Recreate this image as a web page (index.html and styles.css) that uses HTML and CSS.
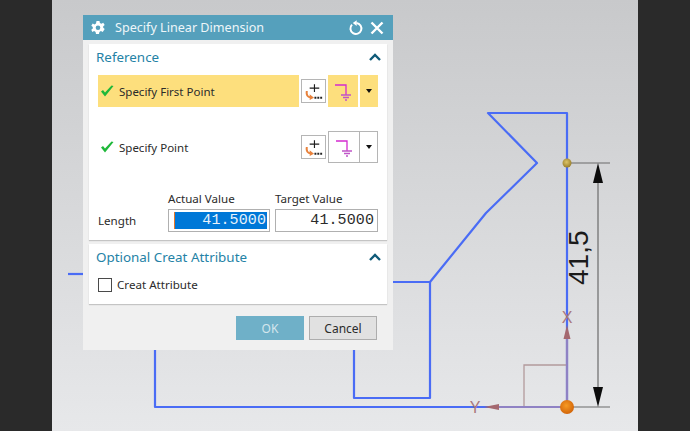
FILE: index.html
```html
<!DOCTYPE html>
<html lang="en">
<head>
<meta charset="utf-8">
<title>Specify Linear Dimension</title>
<link rel="stylesheet" href="styles.css">
</head>
<body>
<div class="screen">
  <div class="side"></div>
  <main class="viewport">
    <svg class="cad" viewBox="52 0 586 431" width="586" height="431">
      <defs>
        <radialGradient id="goldBall" cx="45%" cy="40%" r="60%">
          <stop offset="0" stop-color="#dcc468"/>
          <stop offset="1" stop-color="#9a7f2c"/>
        </radialGradient>
        <radialGradient id="orangeBall" cx="45%" cy="40%" r="60%">
          <stop offset="0" stop-color="#f79a22"/>
          <stop offset="1" stop-color="#d2650a"/>
        </radialGradient>
      </defs>
      <g class="cad-blue">
        <path d="M68 274H90"/>
        <path d="M380 282H430L486 213L537 163L488 113H567V407H155V340"/>
        <path d="M430 282V398H354V340"/>
      </g>
      <g class="dim">
        <path d="M567 163H610"/>
        <path d="M567 407H610"/>
        <path d="M598 170V400"/>
      </g>
      <path class="arrow" d="M598 163L593 183H603Z"/>
      <path class="arrow" d="M598 407L593 387H603Z"/>
      <text class="dim-text" transform="translate(588 285) rotate(-90)">41,5</text>
      <path class="triad-box" d="M567 365H524V407"/>
      <path class="triad-line" d="M567 339V407H499"/>
      <path class="triad-arrow" d="M567 325L563.500 339H570.500Z"/>
      <path class="triad-arrow" d="M484 407L499 404V410Z"/>
      <text class="triad-text" x="567" y="323">X</text>
      <text class="triad-text" x="475" y="413">Y</text>
      <circle class="gold" cx="567" cy="163" r="4.500"/>
      <circle class="orange" cx="567" cy="407" r="7"/>
    </svg>

    <section class="dialog">
      <header class="titlebar">
        <svg class="gear" viewBox="0 0 16 16" width="16" height="16">
          <path d="M6.500 1h3l.4 2 1.500.7 1.800-1 1.500 2.300-1.500 1.300v1.400l1.500 1.300L12.700 12l-1.800-1-1.500.9-.4 2.100h-3l-.4-2.100-1.500-.9-1.800 1L1.300 9.700 2.800 8.400V7L1.300 5.700 2.700 3.400l1.800 1L6 3.400z"/>
          <circle cx="8" cy="7.700" r="2.300"/>
        </svg>
        <h1 class="title">Specify Linear Dimension</h1>
        <svg class="tool" viewBox="0 0 16 16" width="16" height="16">
          <path class="tool-stroke" d="M4 4.600A5.500 5.500 0 1 0 8.500 3"/>
          <path class="tool-fill" d="M8.700 .2V6L4.800 3z"/>
        </svg>
        <svg class="tool" viewBox="0 0 16 16" width="16" height="16">
          <path class="tool-stroke thick" d="M2.500 2.500L13.500 13.500M13.500 2.500L2.500 13.500"/>
        </svg>
      </header>

      <div class="panel panel-reference">
        <div class="panel-head">
          <h2 class="panel-title">Reference</h2>
          <svg class="chevron" viewBox="0 0 12 8" width="12" height="8"><path d="M1 7L6 2L11 7"/></svg>
        </div>

        <div class="point-row">
          <div class="point-label active">
            <svg class="check" viewBox="0 0 14 12" width="14" height="12"><path d="M1 6.500L5 11.500L13.500 1L11.500 .5L5 7.500L3 5Z"/></svg>
            <span>Specify First Point</span>
          </div>
          <button class="add-btn" type="button">
            <svg viewBox="0 0 24 24" width="24" height="24">
              <path class="plus" d="M13 5V13M8 9H18"/>
              <path class="swoosh" d="M4 12C3 17 6 20 10 19.500L9 17.500C7 18 5.500 16 6 12Z"/>
              <path class="swoosh-tip" d="M8 15.500L12.500 19L8 21.500Z"/>
              <path class="dots" d="M13 19h2M16 19h2M19 19h2"/>
            </svg>
          </button>
          <div class="picker active">
            <div class="picker-main">
              <svg viewBox="0 0 20 20" width="20" height="20">
                <path class="pt-line" d="M2 4H13V14"/>
                <path class="pt-ground" d="M8 14H18M10 16.500H16M12 19H14"/>
              </svg>
            </div>
            <div class="picker-drop"><span class="caret"></span></div>
          </div>
        </div>

        <div class="point-row second">
          <div class="point-label">
            <svg class="check" viewBox="0 0 14 12" width="14" height="12"><path d="M1 6.500L5 11.500L13.500 1L11.500 .5L5 7.500L3 5Z"/></svg>
            <span>Specify Point</span>
          </div>
          <button class="add-btn" type="button">
            <svg viewBox="0 0 24 24" width="24" height="24">
              <path class="plus" d="M13 5V13M8 9H18"/>
              <path class="swoosh" d="M4 12C3 17 6 20 10 19.500L9 17.500C7 18 5.500 16 6 12Z"/>
              <path class="swoosh-tip" d="M8 15.500L12.500 19L8 21.500Z"/>
              <path class="dots" d="M13 19h2M16 19h2M19 19h2"/>
            </svg>
          </button>
          <div class="picker">
            <div class="picker-main">
              <svg viewBox="0 0 20 20" width="20" height="20">
                <path class="pt-line" d="M2 4H13V14"/>
                <path class="pt-ground" d="M8 14H18M10 16.500H16M12 19H14"/>
              </svg>
            </div>
            <div class="picker-drop"><span class="caret"></span></div>
          </div>
        </div>

        <div class="values">
          <span></span>
          <span class="col-head">Actual Value</span>
          <span class="col-head target">Target Value</span>
          <span class="row-label">Length</span>
          <div class="value-box"><span class="selected">41.5000</span></div>
          <div class="value-box"><span class="plain">41.5000</span></div>
        </div>
      </div>

      <div class="panel panel-attr">
        <div class="panel-head">
          <h2 class="panel-title">Optional Creat Attribute</h2>
          <svg class="chevron" viewBox="0 0 12 8" width="12" height="8"><path d="M1 7L6 2L11 7"/></svg>
        </div>
        <label class="check-row">
          <span class="box"></span>
          <span>Creat Attribute</span>
        </label>
      </div>

      <footer class="actions">
        <button class="btn ok" type="button">OK</button>
        <button class="btn cancel" type="button">Cancel</button>
      </footer>
    </section>
  </main>
  <div class="side"></div>
</div>
</body>
</html>
```

FILE: styles.css
```css
* { box-sizing: border-box; }
html, body { margin: 0; padding: 0; }
body {
  width: 690px;
  height: 431px;
  overflow: hidden;
  font-family: "Noto Sans", "Open Sans", sans-serif;
  color: #2b2b2b;
}
.screen { display: flex; width: 690px; height: 431px; }
.side { width: 52px; flex: none; background: #2a2a2a; }
.viewport {
  flex: 1;
  position: relative;
  background: linear-gradient(#c8c9cb, #e7e8ea);
}
.cad { position: absolute; left: 0; top: 0; display: block; }
.cad path { fill: none; }
.cad-blue path { stroke: #4a6cf5; stroke-width: 2.2; stroke-linejoin: round; }
.dim path { stroke: #6b6b6b; stroke-width: 1.2; }
.cad path.arrow { fill: #0c0c0c; }
.dim-text {
  font-family: "Liberation Sans", sans-serif;
  font-size: 28px;
  fill: #1a1a1a;
}
.triad-box { stroke: #b39a9c; stroke-width: 1.3; }
.triad-line { stroke: #8f82c4; stroke-width: 2.2; }
.cad path.triad-arrow { fill: #a4686f; }
.triad-text {
  font-family: "Liberation Sans", sans-serif;
  font-size: 16px;
  fill: #a9777c;
  text-anchor: middle;
}
.gold { fill: url(#goldBall); }
.orange { fill: url(#orangeBall); }

.dialog {
  position: absolute;
  left: 31px;
  top: 15px;
  width: 310px;
  height: 335px;
  background: #f0f0f0;
  display: flex;
  flex-direction: column;
}
.titlebar {
  height: 25px;
  background: #55a0bc;
  display: flex;
  align-items: center;
  padding: 0 8px 0 7px;
  color: #eef6f9;
}
.gear { margin-right: 9px; flex: none; }
.gear path { fill: #fff; }
.gear circle { fill: #55a0bc; }
.title {
  flex: 1;
  margin: 0;
  font-size: 12.600px;
  font-weight: 400;
  white-space: nowrap;
}
.tool { margin-left: 5px; flex: none; }
.tool-stroke { fill: none; stroke: #fff; stroke-width: 2; }
.tool-stroke.thick { stroke-width: 2.400; }
.tool-fill { fill: #fff; }

.panel {
  margin: 0 6px;
  background: #fff;
  box-shadow: 0 1px 1px #c4c4c4;
  padding: 0 9px;
}
.panel-reference { margin-top: 4px; height: 196px; }
.panel-attr { margin-top: 4px; height: 60px; }
.panel-head {
  height: 26px;
  padding-bottom: 1px;
  margin: 0 -3px 0 -2px;
  display: flex;
  align-items: center;
  justify-content: space-between;
}
.panel-title {
  margin: 0;
  font-size: 13.400px;
  font-weight: 400;
  color: #2482a6;
}
.chevron path { fill: none; stroke: #0f5a78; stroke-width: 2.400; }

.point-row {
  margin-top: 5px;
  height: 32px;
  display: flex;
  align-items: center;
}
.point-row.second { margin-top: 24px; }
.point-label {
  width: 201px;
  height: 32px;
  display: flex;
  align-items: center;
  gap: 5px;
  padding-left: 2px;
  font-size: 11.500px;
}
.point-label.active { background: #fddf7d; }
.check path { fill: #1fb83a; }
.add-btn {
  width: 25px;
  height: 24px;
  margin: 0 2px;
  padding: 0;
  border: 1px solid #b5b5b5;
  background: #fff;
  display: flex;
  align-items: center;
  justify-content: center;
}
.plus { fill: none; stroke: #1d1d1d; stroke-width: 1.200; }
.swoosh, .swoosh-tip { fill: #e8823c; }
.dots { fill: none; stroke: #222; stroke-width: 2; }
.picker {
  width: 50px;
  height: 32px;
  display: flex;
}
.picker-main {
  width: 32px;
  border: 1px solid #b5b5b5;
  display: flex;
  align-items: center;
  justify-content: center;
}
.picker-drop {
  flex: 1;
  border: 1px solid #b5b5b5;
  border-left: 0;
  display: flex;
  align-items: center;
  justify-content: center;
}
.picker.active { background: #fddf7d; }
.picker.active .picker-main { border: 0; border-right: 2px solid #fff; }
.picker.active .picker-drop { border: 0; }
.caret {
  width: 0;
  height: 0;
  border-left: 3.500px solid transparent;
  border-right: 3.500px solid transparent;
  border-top: 4px solid #111;
}
.pt-line { fill: none; stroke: #d42bd0; stroke-width: 1.300; }
.pt-ground { fill: none; stroke: #c056c8; stroke-width: 1.500; }

.values {
  margin-top: 24px;
  display: grid;
  grid-template-columns: 70px 102px 108px;
  grid-template-rows: 22px 23px;
  font-size: 11.600px;
  align-items: center;
}
.col-head { white-space: nowrap; }
.col-head.target { margin-left: 5px; }
.value-box {
  height: 23px;
  border: 1px solid #b0b0b0;
  padding: 2px 2px 2px 5px;
  display: flex;
  background: #fff;
  font-family: "Liberation Mono", monospace;
  font-size: 15px;
  letter-spacing: .1px;
}
.value-box + .value-box { margin-left: 5px; }
.selected {
  flex: 1;
  background: #0078d7;
  color: #e8f2fb;
  text-align: right;
  border-left: 1px solid #e8782a;
  padding-right: 1px;
  line-height: 18px;
}
.plain { flex: 1; text-align: right; line-height: 18px; padding-right: 1px; }

.check-row {
  display: flex;
  align-items: center;
  gap: 5px;
  font-size: 11.600px;
  margin-top: 7px;
}
.box {
  width: 14px;
  height: 14px;
  border: 1.500px solid #4a4a4a;
  background: #fff;
}
.actions {
  margin-top: 12px;
  padding-right: 16px;
  display: flex;
  justify-content: flex-end;
  gap: 5px;
}
.btn {
  width: 68px;
  height: 24px;
  padding: 0;
  font-family: inherit;
  font-size: 12px;
}
.ok { border: 0; background: #6fb0c8; color: #d4e6ed; }
.cancel { border: 1px solid #adadad; background: #e1e1e1; color: #2b2b2b; }
```
